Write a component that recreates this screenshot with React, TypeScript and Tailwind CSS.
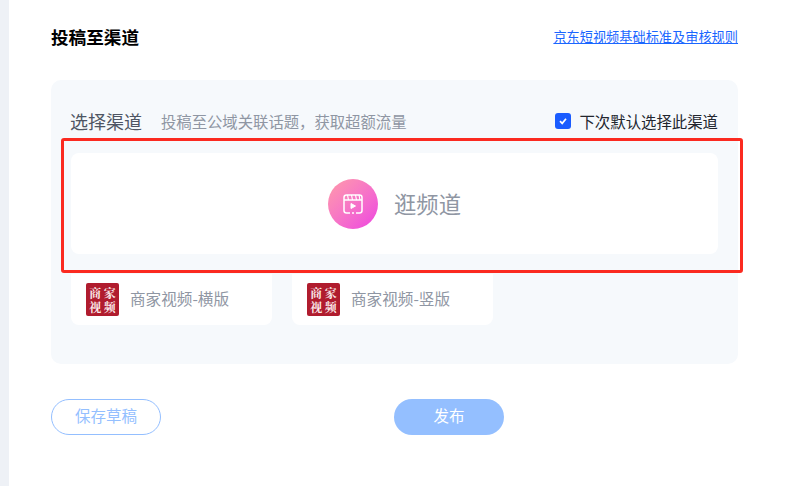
const font = { fontFamily: '"Noto Sans CJK SC", "Noto Sans", sans-serif' };

function Logo() {
  return (
    <div className="grid h-[33px] w-[33px] shrink-0 grid-cols-2 content-center justify-items-center rounded-[2px] bg-[#b01c2e] px-[2px] text-[12px] font-bold leading-[14px] text-[#fbeaea] [font-family:'Noto_Serif_CJK_SC',serif]">
      <span>商</span>
      <span>家</span>
      <span>视</span>
      <span>频</span>
    </div>
  );
}

function Channel({ label }: { label: string }) {
  return (
    <div className="flex h-[51px] w-[201px] items-center gap-[11px] rounded-b-lg bg-white pl-[15px]">
      <Logo />
      <span className="pb-[1px] text-[15.6px] text-[#8f96a3]">{label}</span>
    </div>
  );
}

export default function App() {
  return (
    <div className="flex h-[486px] w-[805px] overflow-hidden bg-white" style={font}>
      <div className="w-[9px] shrink-0 bg-[#eef1f6]" />
      <main className="box-content w-[687px] pl-[42px]">
        <header className="flex h-[80px] items-start justify-between pt-[24px]">
          <h1 className="text-[17.6px] font-bold leading-[26px] text-black">投稿至渠道</h1>
          <a className="mt-[3px] text-[13.2px] leading-[20px] text-[#1a66ff] underline">
            京东短视频基础标准及审核规则
          </a>
        </header>

        <section className="relative h-[284px] rounded-[10px] bg-[#f6f9fc] px-5 pt-[28px]">
          <div className="flex h-[45px] items-start">
            <h2 className="-ml-[1px] text-[18px] font-normal leading-[26px] text-[#4e5563]">选择渠道</h2>
            <p className="ml-[19px] mt-[2px] text-[15.35px] leading-[22px] text-[#8f96a3]">
              投稿至公域关联话题，获取超额流量
            </p>
            <label className="ml-auto mt-[2px] flex items-center gap-[8px] text-[15.4px] leading-[22px] text-[#22262e]">
              <span className="flex h-4 w-4 items-center justify-center rounded-[3px] bg-[#1a5cff]">
                <svg width="10" height="10" viewBox="0 0 10 10" fill="none">
                  <path d="M2 5.2 4.2 7.4 8 2.8" stroke="#fff" strokeWidth="1.7" />
                </svg>
              </span>
              下次默认选择此渠道
            </label>
          </div>

          <div className="flex h-[101px] items-center justify-center gap-4 rounded-lg bg-white">
            <div className="flex h-[50px] w-[50px] items-center justify-center rounded-full bg-gradient-to-br from-[#ff9aa8] to-[#ee3fe0]">
              <svg width="22" height="22" viewBox="0 0 22 22" fill="none" stroke="#fff" strokeWidth="1.5">
                <path d="M8 20H4.5A2.5 2.5 0 0 1 2 17.5v-13A2.5 2.5 0 0 1 4.5 2h13A2.5 2.5 0 0 1 20 4.5v13a2.5 2.5 0 0 1-2.5 2.5H14" />
                <path d="M10 20h2" />
                <path d="M2 7h18" />
                <path d="M5.5 2 6.5 7M9.5 2 10.5 7M13.5 2 14.5 7M17 2 18 7" strokeWidth="1.2" />
                <path d="M9 10.5v5l4.5-2.5z" fill="#fff" strokeWidth="1" />
              </svg>
            </div>
            <span className="pb-[2px] text-[22.3px] leading-[30px] text-[#8f96a3]">逛频道</span>
          </div>

          <div className="mt-5 flex gap-5">
            <Channel label="商家视频-横版" />
            <Channel label="商家视频-竖版" />
          </div>

          <div className="absolute left-[10px] top-[58px] h-[135px] w-[682px] rounded-[3px] border-[3px] border-[#fb2a20]" />
        </section>

        <div className="mt-[35px] flex gap-[233px]">
          <button className="h-9 w-[110px] rounded-full border border-[#94bfff] bg-white pb-[2px] text-[15.5px] text-[#94bfff]">
            保存草稿
          </button>
          <button className="h-9 w-[110px] rounded-full bg-[#94bfff] pb-[2px] text-[15.5px] text-white">发布</button>
        </div>
      </main>
    </div>
  );
}
